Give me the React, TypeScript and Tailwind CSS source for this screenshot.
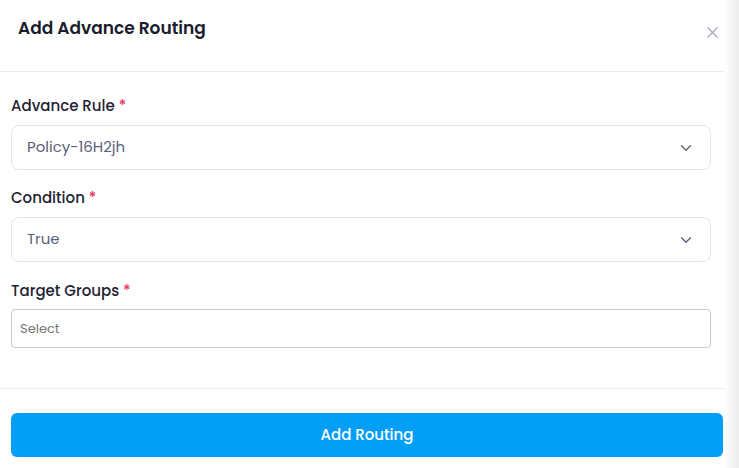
import { ChevronDown } from "lucide-react";

const font = { fontFamily: "Poppins, Inter, 'Noto Sans', sans-serif" };

function Label({ text }: { text: string }) {
  return (
    <label className="block h-[20px] text-[15px] font-medium leading-[20px] text-[#1f2233]">
      {text} <span className="text-[#f0355e]">*</span>
    </label>
  );
}

function SelectBox({ value }: { value: string }) {
  return (
    <div className="flex h-[45px] items-center justify-between rounded-[8px] border border-[#e4e4ee] bg-white pl-[15px] pr-[15px]">
      <span className="text-[15px] text-[#5c6078]">{value}</span>
      <ChevronDown size={18} strokeWidth={1.8} className="text-[#5c6078]" />
    </div>
  );
}

export default function App() {
  return (
    <div className="flex h-[468px] w-[739px] overflow-hidden bg-white" style={font}>
      <div className="flex w-[725px] flex-col">
        <div className="flex h-[72px] shrink-0 items-start justify-between border-b border-[#ececf0] pl-[18px] pr-[7px] pt-[17px]">
          <h2 className="text-[17px] font-semibold leading-[22px] text-[#1a1c2e]">Add Advance Routing</h2>
          <svg width="11" height="11" viewBox="0 0 11 11" className="mt-[10px]" fill="none">
            <path d="M0.5 0.5L10.5 10.5M10.5 0.5L0.5 10.5" stroke="#a3a5b8" strokeWidth="1.2" />
          </svg>
        </div>

        <div className="flex flex-col pl-[11px] pr-[14px] pt-[24px]">
          <Label text="Advance Rule" />
          <div className="mt-[9px]">
            <SelectBox value="Policy-16H2jh" />
          </div>

          <div className="mt-[18px]">
            <Label text="Condition" />
          </div>
          <div className="mt-[9px]">
            <SelectBox value="True" />
          </div>

          <div className="mt-[19px]">
            <Label text="Target Groups" />
          </div>
          <div className="mt-[8px] flex h-[39px] items-center rounded-[4px] border border-[#cacaca] pl-[8px]">
            <span className="text-[13px] text-[#757575]">Select</span>
          </div>
        </div>

        <div className="mt-[40px] border-t border-[#ececf0] pl-[11px] pr-[2px] pt-[24px]">
          <button
            type="button"
            className="flex h-[44px] w-full items-center justify-center rounded-[6px] bg-[#039ef5] text-[15px] font-medium text-white"
          >
            Add Routing
          </button>
        </div>
      </div>
      <div className="w-[14px] shrink-0 bg-gradient-to-r from-white to-[#ebebeb]" />
    </div>
  );
}
